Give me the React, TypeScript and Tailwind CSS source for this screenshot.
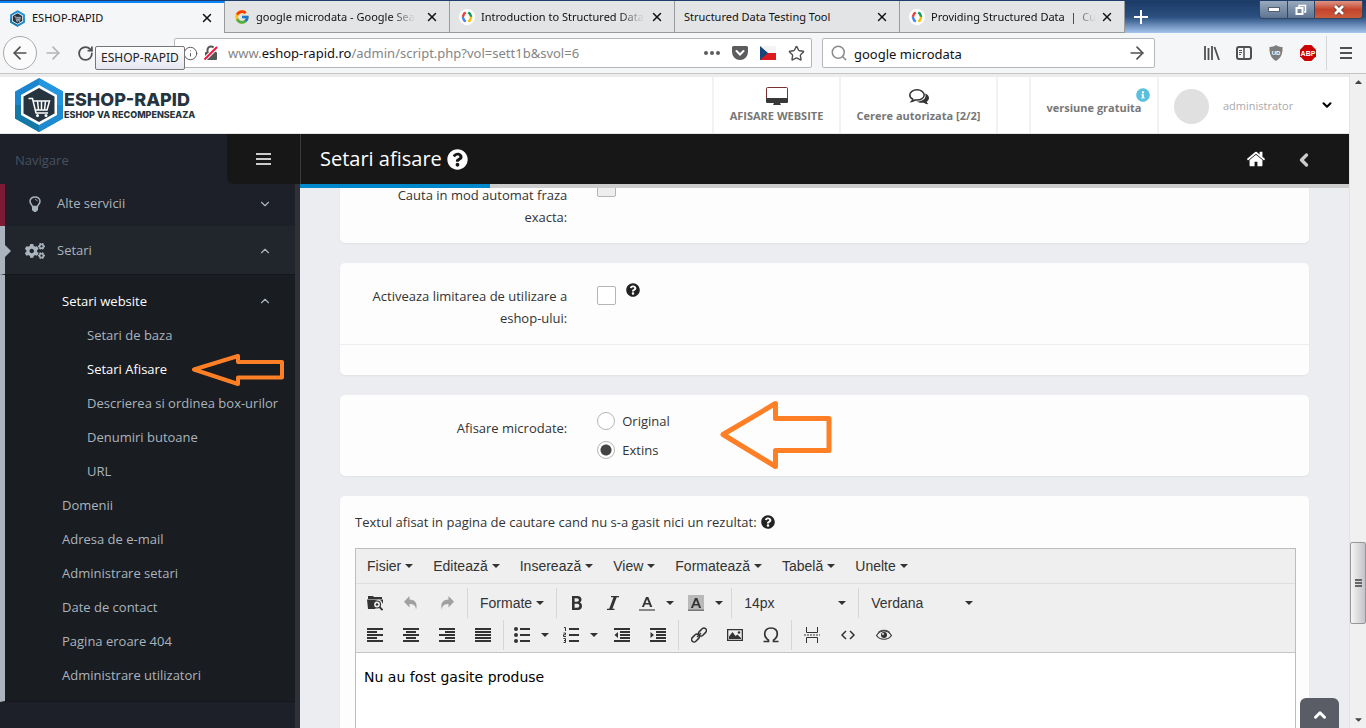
import type { ReactNode } from "react";
import { FaCaretDown, FaCogs, FaInfoCircle, FaQuestionCircle } from "react-icons/fa";
import { FcGoogle } from "react-icons/fc";
import {
	ArrowLeft,
	ArrowRight,
	ChevronDown,
	ChevronLeft,
	ChevronUp,
	Info,
	RotateCw,
	Search,
	Star,
	X,
} from "lucide-react";

function HexLogo({ size }: { size: number }) {
	return (
		<svg width={size} height={size} viewBox="0 0 56 56" className="shrink-0">
			<path d="M28 1 52 14.500V41.500L28 55 4 41.500V14.500Z" fill="#1b86cf" />
			<path d="M28 1 52 14.500V28H28Z" fill="#2496dd" />
			<path d="M4 28V41.500L28 55V28Z" fill="#1579a8" />
			<path d="M28 55 52 41.500V28H28Z" fill="#1e8bd0" />
			<path d="M28 8 46 18V38L28 48 10 38V18Z" fill="#fff" />
			<path d="M28 11 43.500 19.500V36.500L28 45 12.500 36.500V19.500Z" fill="#263440" />
			<g stroke="#fff" fill="none" strokeWidth="1.500">
				<path d="M17.500 21.500h4l3.500 14.500h12" />
				<path d="M22.500 24h16l-2.500 9H24.500" />
				<path d="M26.500 24l1 9M30.500 24v9M34.500 24l-1 9" />
			</g>
			<circle cx="26.500" cy="38.500" r="1.500" fill="#fff" />
			<circle cx="35" cy="38.500" r="1.500" fill="#fff" />
		</svg>
	);
}

function DevelopersLogo() {
	return (
		<svg width="16" height="16" viewBox="0 0 16 16" className="shrink-0">
			<circle cx="8" cy="8" r="8" fill="#fff" />
			<g fill="none" strokeWidth="2.400">
				<path d="M6.800 3.500 5.200 4.500 3.700 8" stroke="#ea4335" />
				<path d="M3.700 8 5.200 11.500 6.800 12.500" stroke="#4285f4" />
				<path d="M9.200 3.500 10.800 4.500 12.300 8" stroke="#0f9d58" />
				<path d="M12.300 8 10.800 11.500 9.200 12.500" stroke="#fbbc05" />
			</g>
		</svg>
	);
}

interface TabProps {
	title: string;
	icon?: ReactNode;
	active?: boolean;
	faded?: boolean;
}

function BrowserTab({ title, icon, active, faded }: TabProps) {
	return (
		<div
			className={
				active
					? "flex h-full w-[225px] items-center border-r border-[#9a9a9c] border-t-2 border-t-[#0a84ff] bg-[#f5f6f7] pr-[10px] pl-[9px]"
					: "flex h-full w-[225px] items-center border-r border-b border-[#9a9a9c] bg-[#e3e4e6] pt-px pr-[10px] pl-[9px]"
			}
		>
			{icon}
			<span
				className={
					faded
						? "ml-[6px] mask-r-from-85% whitespace-pre"
						: "ml-[6px] whitespace-pre first:ml-0"
				}
			>
				{title}
			</span>
			<button type="button" aria-label="Close tab" className="ml-auto">
				<X size={14} strokeWidth={2.5} />
			</button>
		</div>
	);
}

function TabStrip() {
	return (
		<div className="flex h-[33px] border-t border-[#1f3d6b] bg-linear-to-b from-[#1b3a66] via-[#2c5080] to-[#a5c6ee] text-[11px] text-[#111]">
			<BrowserTab title="ESHOP-RAPID" icon={<HexLogo size={17} />} active />
			<BrowserTab title="google microdata - Google Sea" icon={<FcGoogle size={16} className="shrink-0" />} faded />
			<BrowserTab title="Introduction to Structured Data" icon={<DevelopersLogo />} faded />
			<BrowserTab title="Structured Data Testing Tool" />
			<BrowserTab title="Providing Structured Data  |  Cu" icon={<DevelopersLogo />} faded />
			<button type="button" aria-label="New tab" className="ml-[9px] flex items-center text-white">
				<svg width="14" height="14" viewBox="0 0 14 14">
					<path d="M7 0v14M0 7h14" stroke="currentColor" strokeWidth="2" />
				</svg>
			</button>
			<div className="mr-[3px] ml-auto flex h-[18px] overflow-hidden rounded-b-sm border border-t-0 border-[#33465f]">
				<button type="button" aria-label="Minimize" className="flex w-7 items-center justify-center border-r border-[#33465f] bg-linear-to-b from-[#9aa9bd] to-[#5d7492]">
					<svg width="12" height="5" viewBox="0 0 12 5">
						<rect x="0.500" y="0.500" width="11" height="4" fill="#fff" stroke="#55606e" />
					</svg>
				</button>
				<button type="button" aria-label="Restore" className="flex w-[27px] items-center justify-center border-r border-[#33465f] bg-linear-to-b from-[#9aa9bd] to-[#5d7492]">
					<svg width="12" height="12" viewBox="0 0 12 12" fill="none">
						<path d="M4 3V1.500h6.500V8H9" stroke="#fff" strokeWidth="1.500" />
						<rect x="1.500" y="4" width="6" height="6" stroke="#fff" strokeWidth="2" />
					</svg>
				</button>
				<button type="button" aria-label="Close" className="flex w-[47px] items-center justify-center bg-linear-to-b from-[#dd9384] via-[#c4432b] to-[#c95d3c]">
					<svg width="14" height="12" viewBox="0 0 14 12">
						<path d="M3 2l8 8M11 2l-8 8" stroke="#5b3a3a" strokeWidth="4.500" />
						<path d="M3 2l8 8M11 2l-8 8" stroke="#fff" strokeWidth="2.800" />
					</svg>
				</button>
			</div>
		</div>
	);
}

function AddressBar() {
	return (
		<div className="relative flex h-[41px] items-center border-b border-[#c4c4c6] bg-[#f5f6f7] text-[#4f5052]">
			<button type="button" aria-label="Back" className="ml-[3px] flex size-[34px] shrink-0 items-center justify-center rounded-full border border-[#a9a9ab] bg-[#fbfbfb]">
				<ArrowLeft size={20} />
			</button>
			<button type="button" aria-label="Forward" className="ml-[6px] text-[#b5b5b7]">
				<ArrowRight size={20} />
			</button>
			<button type="button" aria-label="Reload" className="ml-[14px]">
				<RotateCw size={17} strokeWidth={2.5} />
			</button>
			<div className="ml-[80px] flex h-[30px] min-w-0 flex-1 items-center rounded-xs border border-[#b7b7b9] bg-white pr-[6px] pl-2">
				<Info size={15} strokeWidth={1.500} className="shrink-0 text-[#555]" />
				<svg width="16" height="16" viewBox="0 0 16 16" className="ml-[5px] shrink-0">
					<path d="M4.500 8V5a3.500 3.500 0 0 1 7 0v3" fill="none" stroke="#555" strokeWidth="2" />
					<rect x="2" y="7" width="12" height="8" rx="1" fill="#555" />
					<path d="M1.500 14.500 14 2" stroke="#fff" strokeWidth="4" />
					<path d="M1.500 14.500 14 2" stroke="#f2123b" strokeWidth="2" />
				</svg>
				<div
					role="textbox"
					aria-label="Address"
					contentEditable
					suppressContentEditableWarning
					className="ml-[9px] min-w-0 flex-1 overflow-hidden pt-px text-[13px] whitespace-nowrap text-[#858585]"
				>
					www.<span className="text-[#111]">eshop-rapid.ro</span>/admin/script.php?vol=sett1b&amp;svol=6
				</div>
				<svg width="16" height="4" viewBox="0 0 16 4" fill="#5c5c5e">
					<circle cx="2" cy="2" r="2" />
					<circle cx="8" cy="2" r="2" />
					<circle cx="14" cy="2" r="2" />
				</svg>
				<svg width="16" height="15" viewBox="0 0 16 15" className="ml-3">
					<path d="M1.500 0h13A1.500 1.500 0 0 1 16 1.500V6A8 8 0 0 1 0 6V1.500A1.500 1.500 0 0 1 1.500 0Z" fill="#5c5c5e" />
					<path d="m4.500 5 3.500 3.500L11.500 5" fill="none" stroke="#fff" strokeWidth="2" strokeLinecap="round" />
				</svg>
				<svg width="16" height="14" viewBox="0 0 16 14" className="ml-3">
					<path d="M0 0h16v7H0z" fill="#f4f4f4" />
					<path d="M0 7h16v7H0z" fill="#dc1a1f" />
					<path d="M0 0 8 7 0 14Z" fill="#17457c" />
				</svg>
				<Star size={17} className="ml-3" />
			</div>
			<label className="ml-[10px] flex h-[30px] w-[333px] items-center rounded-xs border border-[#b7b7b9] bg-white px-[7px]">
				<Search size={18} className="shrink-0 text-[#8a8a8c]" />
				<input type="text" aria-label="Search" defaultValue="google microdata" className="ml-[6px] min-w-0 flex-1 pt-[3px] text-[13px] text-[#111] outline-none" />
				<ArrowRight size={20} />
			</label>
			<div className="ml-[49px] flex items-center gap-4">
				<svg width="16" height="14" viewBox="0 0 16 14" stroke="currentColor" strokeWidth="1.800">
					<path d="M1 0v14M4.500 2v12M8 0v14M10.500 1l4.500 13" />
				</svg>
				<svg width="16" height="14" viewBox="0 0 16 14" fill="none" stroke="currentColor">
					<rect x="1" y="1" width="14" height="12" rx="2" strokeWidth="2" />
					<path d="M8 1v12" strokeWidth="1.500" />
					<path d="M3 4.500h3M3 6.500h3M3 8.500h2" />
				</svg>
				<svg width="16" height="16" viewBox="0 0 16 16">
					<path d="M8 0c2 1.500 4 2 6.500 2 .3 6-1 11-6.500 14C2.500 13 1.200 8 1.500 2 4 2 6 1.500 8 0Z" fill="#7d7d7d" />
					<text x="8" y="10" textAnchor="middle" fill="#fff" fontSize="6" fontWeight="bold" fontFamily="Liberation Sans, sans-serif">
						UD
					</text>
				</svg>
				<svg width="16" height="16" viewBox="0 0 16 16">
					<path d="M4.700 0h6.600L16 4.700v6.600L11.300 16H4.700L0 11.300V4.700Z" fill="#cc0000" />
					<text x="8" y="10.500" textAnchor="middle" fill="#fff" fontSize="7" fontWeight="bold" fontFamily="Liberation Sans, sans-serif">
						ABP
					</text>
				</svg>
			</div>
			<button type="button" aria-label="Menu" className="mr-[14px] ml-[10px] flex h-[34px] items-center border-l border-[#d5d5d7] pl-[13px]">
				<svg width="12" height="12" viewBox="0 0 12 12" fill="currentColor">
					<path d="M0 0h12v2H0zM0 5h12v2H0zM0 10h12v2H0z" />
				</svg>
			</button>
			<div role="tooltip" className="absolute top-[13px] left-[95px] rounded-xs border border-[#767676] bg-linear-to-b from-white to-[#e5e6f1] px-[5px] text-[12px] leading-[22px] text-[#222]">
				ESHOP-RAPID
			</div>
		</div>
	);
}

function SiteHeader() {
	return (
		<header className="flex h-[60px] shrink-0 border-t-[3px] border-b border-t-[#ececec] border-b-[#e6e6e6] bg-white text-[11px] font-bold text-[#777]">
			<a href="#home" className="flex items-center pl-[11px] font-['Inter',sans-serif] font-extrabold text-[#263440]">
				<HexLogo size={56} />
				<span className="-ml-[3px] flex flex-col">
					<span className="text-[18px] leading-[18px]">ESHOP-RAPID</span>
					<span className="text-[9px] leading-[11px]">ESHOP VA RECOMPENSEAZA</span>
				</span>
			</a>
			<a href="#website" className="ml-auto flex w-[127px] flex-col items-center border-l-2 border-[#f2f2f2] pt-[9px]">
				<svg width="22" height="18" viewBox="0 0 22 18" className="mt-px mb-[3px]">
					<rect x="0.500" y="0.500" width="21" height="14" rx="1" fill="#fff" stroke="#7a2f33" />
					<path d="M0 11h22v4q0 1-1 1h-7l1 2H7l1-2H1q-1 0-1-1z" fill="#383838" />
				</svg>
				<span className="leading-4">AFISARE WEBSITE</span>
			</a>
			<a href="#cerere" className="flex w-[157px] flex-col items-center border-l-2 border-[#f2f2f2] pt-[9px]">
				<svg width="20" height="17" viewBox="0 0 20 17" className="mt-[3px] mb-[2px]" fill="#333">
					<path d="M16 4.500c2.500.8 4 2.400 4 4.500 0 1.500-.9 2.800-2.300 3.700.2 1 .8 1.700 1.600 2.400-1.700.2-3.300-.4-4.500-1.400-2.600.4-5.300.1-7.300-1.200 5 .2 9.500-2 9-6.500z" />
					<path
						d="M8 .8C12 .8 15.200 3 15.200 5.900S12 11 8 11c-.6 0-1.200 0-1.700-.1-1 .8-2.200 1.300-3.600 1.500.6-.6 1-1.300 1.100-2.200C2 9.300.8 7.700.8 5.900.8 3 4 .8 8 .8Z"
						fill="#fff"
						stroke="#333"
						strokeWidth="1.500"
					/>
				</svg>
				<span className="leading-4">Cerere autorizata [2/2]</span>
			</a>
			<div className="w-[33px] border-l-2 border-[#f2f2f2]" />
			<a href="#versiune" className="relative flex w-[128px] items-center justify-center border-l-2 border-[#f2f2f2] pt-[6px]">
				versiune gratuita
				<FaInfoCircle size={14} className="absolute top-[11px] right-[7px] text-[#5bc0de]" />
			</a>
			<button type="button" className="flex w-[192px] items-center border-l-2 border-[#f2f2f2] pr-[15px] pl-[15px] font-normal text-[#aaa]">
				<span className="mt-[2px] size-[35px] rounded-full bg-[#e0e0e0]" />
				<span className="ml-[14px] pt-[3px] text-[11px]">administrator</span>
				<ChevronDown size={14} strokeWidth={3.500} className="ml-auto text-black" />
			</button>
		</header>
	);
}

function SubLink({ label, nested, active, children }: { label: string; nested?: boolean; active?: boolean; children?: ReactNode }) {
	return (
		<li className="relative">
			<a
				href="#setari"
				className={
					nested
						? active
							? "block pl-[82px] leading-[34px] text-white"
							: "block pl-[82px] leading-[34px]"
						: "block pl-[57px] leading-[34px]"
				}
			>
				{label}
			</a>
			{children}
		</li>
	);
}

function Sidebar() {
	return (
		<aside className="w-[300px] shrink-0 overflow-hidden border-r-[5px] border-[#303138] bg-[#1d2028] text-[13px] text-[#abb4be]">
			<a href="#servicii" className="flex h-[42px] items-center border-l-[5px] border-[#7d1b34] pr-[23px] pb-[3px] pl-6">
				<svg width="12" height="16" viewBox="0 0 12 16" fill="none" stroke="currentColor">
					<path d="M3.500 10.500C3.500 9 1 8 1 5.300 1 2.700 3.300 1 6 1s5 1.700 5 4.300C11 8 8.500 9 8.500 10.500Z" strokeWidth="1.500" />
					<path d="M6 3.500c1.200 0 2 .6 2.300 1.700" />
					<path d="M3.500 11h5v3L7 15.500H5L3.500 14z" fill="currentColor" />
				</svg>
				<span className="ml-4">Alte servicii</span>
				<ChevronDown size={14} className="ml-auto" />
			</a>
			<a href="#setari" className="relative flex h-12 items-center border-l-[5px] border-[#abb4be] bg-[#21262d] pt-[2px] pr-[23px] pl-5">
				<FaCogs size={20} />
				<span className="ml-3">Setari</span>
				<ChevronUp size={14} className="ml-auto" />
				<svg width="6" height="12" viewBox="0 0 6 12" className="absolute left-0" fill="#abb4be">
					<path d="M0 0l6 6-6 6z" />
				</svg>
			</a>
			<ul className="border-t border-b border-l-[5px] border-[#15171a] border-l-[#abb4be] bg-[#191c20] pt-[9px] pb-[9px]">
				<li>
					<a href="#website" className="flex items-center pr-[23px] pl-[57px] leading-[34px] text-white">
						Setari website
						<ChevronUp size={14} className="ml-auto text-[#abb4be]" />
					</a>
				</li>
				<SubLink label="Setari de baza" nested />
				<SubLink label="Setari Afisare" nested active>
					<svg width="96" height="34" viewBox="0 0 96 34" className="absolute top-0 left-[185px]" fill="none" stroke="#ff7f27" strokeWidth="4">
						<path d="M4 17.500 48 4v6h44v15.500H48V32Z" strokeLinejoin="round" />
					</svg>
				</SubLink>
				<SubLink label="Descrierea si ordinea box-urilor" nested />
				<SubLink label="Denumiri butoane" nested />
				<SubLink label="URL" nested />
				<SubLink label="Domenii" />
				<SubLink label="Adresa de e-mail" />
				<SubLink label="Administrare setari" />
				<SubLink label="Date de contact" />
				<SubLink label="Pagina eroare 404" />
				<SubLink label="Administrare utilizatori" />
			</ul>
		</aside>
	);
}

function TitleBar() {
	return (
		<div className="flex h-[50px] shrink-0 bg-[#171717]">
			<div className="flex w-[300px] shrink-0 bg-[#1d2028]">
				<span className="flex flex-1 items-center pt-1 pl-[15px] text-[13px] text-[#465162]">Navigare</span>
				<button type="button" aria-label="Comuta meniul" className="flex w-[73px] items-center justify-center rounded-bl-md bg-[#171717] text-[#ccc]">
					<svg width="15" height="12" viewBox="0 0 15 12" fill="currentColor">
						<path d="M0 0h15v2H0zM0 5h15v2H0zM0 10h15v2H0z" />
					</svg>
				</button>
			</div>
			<div className="flex flex-1 items-center border-l border-[#3a3a3a] pr-[35px] pl-[19px] text-white">
				<h1 className="text-[20px]">Setari afisare</h1>
				<FaQuestionCircle size={21} className="ml-[5px]" />
				<a href="#home" aria-label="Acasa" className="ml-auto">
					<svg width="20" height="20" viewBox="0 0 1792 1792" fill="currentColor">
						<path d="M1472 992v480q0 26-19 45t-45 19h-384v-384h-256v384h-384q-26 0-45-19t-19-45v-480q0-1 .5-3t.5-3l575-474 575 474q1 2 1 6zm223-69l-62 74q-8 9-21 11h-3q-13 0-21-7l-692-577-692 577q-12 8-24 7-13-2-21-11l-62-74q-8-10-7-23.5t11-21.5l719-599q32-26 76-26t76 26l244 204v-195q0-14 9-23t23-9h192q14 0 23 9t9 23v408l219 182q10 8 11 21.5t-7 23.5z" />
					</svg>
				</a>
				<button type="button" aria-label="Inapoi" className="ml-7 pt-[2px] text-[#ccc]">
					<ChevronLeft size={20} strokeWidth={4} />
				</button>
			</div>
		</div>
	);
}

function Caret() {
	return (
		<svg width="8" height="4" viewBox="0 0 8 4" className="shrink-0" fill="#333">
			<path d="M0 0h8L4 4z" />
		</svg>
	);
}

function MenuButton({ label }: { label: string }) {
	return (
		<button type="button" className="flex h-[30px] items-center gap-1 px-[10px]">
			{label}
			<Caret />
		</button>
	);
}

function Group({ children, first }: { children: ReactNode; first?: boolean }) {
	return (
		<div className={first ? "flex h-[30px] items-center pr-[2px] pl-px" : "flex h-[30px] items-center border-l border-[#d6d6d6] px-[2px]"}>
			{children}
		</div>
	);
}

function ToolIcon({ label, children, split, muted }: { label: string; children: ReactNode; split?: boolean; muted?: boolean }) {
	return (
		<button
			type="button"
			aria-label={label}
			className={
				split
					? "flex h-[30px] w-[49px] items-center gap-[11px] pl-2"
					: muted
						? "flex h-[30px] w-9 items-center justify-center text-[#a0a0a0]"
						: "flex h-[30px] w-9 items-center justify-center"
			}
		>
			<svg width="16" height="16" viewBox="0 0 16 16" fill="currentColor" className="shrink-0">
				{children}
			</svg>
			{split && <Caret />}
		</button>
	);
}

function ToolSelect({ label, value }: { label: string; value: string }) {
	return (
		<label className="relative flex h-[30px] w-[122px] items-center">
			<select aria-label={label} defaultValue={value} className="w-full appearance-none pl-[10px] outline-none">
				<option>{value}</option>
			</select>
			<span className="pointer-events-none absolute right-[10px]">
				<Caret />
			</span>
		</label>
	);
}

function Editor() {
	return (
		<div className="flex-1 border border-[#bdbdbd] bg-white font-['Liberation_Sans',sans-serif] text-[14px] text-[#333]">
			<div className="flex h-[35px] items-center border-b border-[#dedede] bg-[#efefef] pl-px">
				<MenuButton label="Fisier" />
				<MenuButton label="Editează" />
				<MenuButton label="Inserează" />
				<MenuButton label="View" />
				<MenuButton label="Formatează" />
				<MenuButton label="Tabelă" />
				<MenuButton label="Unelte" />
			</div>
			<div className="flex flex-col gap-[2px] border-b border-[#c5c5c5] bg-[#efefef] pt-1 pb-[2px]">
				<div className="flex">
					<Group first>
						<ToolIcon label="Cauta fisier">
							<path d="M1 1h5l1 1h8v2H1zM0 4.500h16V9l-2-3.500A4.500 4.500 0 1 0 9 14H1z" />
							<circle cx="10" cy="9.500" r="3.500" fill="none" stroke="currentColor" strokeWidth="1.200" />
							<circle cx="10" cy="9.500" r="1.300" />
							<path d="m12.500 12 3 3" stroke="currentColor" strokeWidth="1.800" />
						</ToolIcon>
						<ToolIcon label="Anuleaza" muted>
							<path d="M6.500 1v3.500C12 4.500 15 8 13 15c0-4-2-6-6.500-6v3.500L1 6.800z" />
						</ToolIcon>
						<ToolIcon label="Refa" muted>
							<path d="M9.500 1v3.500C4 4.500 1 8 3 15c0-4 2-6 6.500-6v3.500L15 6.800z" />
						</ToolIcon>
					</Group>
					<Group>
						<MenuButton label="Formate" />
					</Group>
					<Group>
						<ToolIcon label="Aldin">
							<path
								fillRule="evenodd"
								d="M3 1h5.500C11 1 12.500 2.300 12.500 4.500c0 1.300-.6 2.400-1.700 3C12.300 8 13 9.300 13 11c0 2.500-1.600 4-4.200 4H3zM5.600 3.200v3.500h2.200c1.300 0 2-.6 2-1.700s-.7-1.800-2-1.800zM5.600 8.800v4h2.500c1.400 0 2.200-.7 2.200-2s-.8-2-2.200-2z"
							/>
						</ToolIcon>
						<ToolIcon label="Cursiv">
							<path d="M6 1h8v1.200h-2.300L7.400 13.800H9.500V15H2v-1.200h2.200L8.500 2.200H6z" />
						</ToolIcon>
						<ToolIcon label="Culoare text" split>
							<path fillRule="evenodd" d="M7 2h2.300l4 10H11L10.200 9.500H5.900L5 12H2.900zM8.100 4.200 6.500 8h3.200z" />
							<path d="M0 14h16v2H0z" fill="#888" />
						</ToolIcon>
						<ToolIcon label="Culoare fundal" split>
							<path d="M0 0h16v16H0z" fill="#b9b9b9" />
							<path fillRule="evenodd" d="M7 3h2.300l3.800 10H11L10.200 10.500H5.900L5 13H2.900zM8.100 5.200 6.500 9h3.200z" />
							<path d="M0 14.500h16V16H0z" fill="#777" />
						</ToolIcon>
					</Group>
					<Group>
						<ToolSelect label="Marime font" value="14px" />
					</Group>
					<Group>
						<ToolSelect label="Font" value="Verdana" />
					</Group>
				</div>
				<div className="flex">
					<Group first>
						<ToolIcon label="Aliniere stanga">
							<path d="M0 1h16v2H0zM0 4h10v2H0zM0 7h16v2H0zM0 10h10v2H0zM0 13h16v2H0z" />
						</ToolIcon>
						<ToolIcon label="Centrare">
							<path d="M0 1h16v2H0zM3 4h10v2H3zM0 7h16v2H0zM3 10h10v2H3zM0 13h16v2H0z" />
						</ToolIcon>
						<ToolIcon label="Aliniere dreapta">
							<path d="M0 1h16v2H0zM6 4h10v2H6zM0 7h16v2H0zM6 10h10v2H6zM0 13h16v2H0z" />
						</ToolIcon>
						<ToolIcon label="Justificare">
							<path d="M0 1h16v2H0zM0 4h16v2H0zM0 7h16v2H0zM0 10h16v2H0zM0 13h16v2H0z" />
						</ToolIcon>
					</Group>
					<Group>
						<ToolIcon label="Lista" split>
							<circle cx="2" cy="2" r="2" />
							<circle cx="2" cy="8" r="2" />
							<circle cx="2" cy="14" r="2" />
							<path d="M6 1h10v2H6zM6 7h10v2H6zM6 13h10v2H6z" />
						</ToolIcon>
						<ToolIcon label="Lista numerotata" split>
							<path d="M6 1h10v2H6zM6 7h10v2H6zM6 13h10v2H6z" />
							<path d="M1 .5h1.500V4M.5 6h2v1.700h-2v1.800H3M.5 11.500h2v4h-2M1 13.500h1.500" fill="none" stroke="currentColor" />
						</ToolIcon>
						<ToolIcon label="Micsoreaza indentarea">
							<path d="M0 1h16v2H0zM6 4h10v2H6zM6 7h10v2H6zM6 10h10v2H6zM0 13h16v2H0zM4 5v6L.5 8z" />
						</ToolIcon>
						<ToolIcon label="Mareste indentarea">
							<path d="M0 1h16v2H0zM6 4h10v2H6zM6 7h10v2H6zM6 10h10v2H6zM0 13h16v2H0zM.5 5v6L4 8z" />
						</ToolIcon>
					</Group>
					<Group>
						<ToolIcon label="Link">
							<g fill="none" stroke="currentColor" strokeWidth="1.500">
								<rect x="7" y="2.500" width="9" height="5" rx="2.500" transform="rotate(-45 11.500 5)" />
								<rect x="0" y="8.500" width="9" height="5" rx="2.500" transform="rotate(-45 4.500 11)" />
								<path d="m6 10 4-4" />
							</g>
						</ToolIcon>
						<ToolIcon label="Imagine">
							<path fillRule="evenodd" d="M0 2h16v12H0zM1.300 3.300v9.400h13.400V3.300z" />
							<path d="M2 12V9.500L5.500 5l3 4 2-1.500L14 11v1z" />
							<circle cx="12" cy="5.500" r="1.300" />
						</ToolIcon>
						<ToolIcon label="Caracter special">
							<path d="M.5 14.500h5v-1.300C3 11.500 1.700 9.700 1.700 6.800 1.700 3.400 4 1 8 1s6.300 2.400 6.300 5.800c0 2.900-1.300 4.700-3.800 6.400v1.300h5" fill="none" stroke="currentColor" strokeWidth="1.700" />
						</ToolIcon>
					</Group>
					<Group>
						<ToolIcon label="Intrerupere pagina">
							<path d="M2.500 0v5.500h11V0M2.500 16v-5.500h11V16" fill="none" stroke="currentColor" />
							<path d="M0 8h16" stroke="currentColor" strokeDasharray="2 1" />
						</ToolIcon>
						<ToolIcon label="Cod sursa">
							<path d="M6 4 2 8l4 4M10 4l4 4-4 4" fill="none" stroke="currentColor" strokeWidth="1.500" />
						</ToolIcon>
						<ToolIcon label="Previzualizare">
							<path d="M.5 8.500C4 2.500 12 2.500 15.500 8.500 12 13.500 4 13.500.5 8.500Z" fill="none" stroke="currentColor" strokeWidth="1.100" />
							<path d="M2 5.500C5 2.500 11 2.500 14 5.500" fill="none" stroke="currentColor" />
							<circle cx="8" cy="8" r="3" />
							<circle cx="7" cy="7" r="1" fill="#efefef" />
						</ToolIcon>
					</Group>
				</div>
			</div>
			<textarea
				aria-label="Text afisat"
				defaultValue="Nu au fost gasite produse"
				className="block h-[120px] w-full resize-none px-2 py-[14px] font-['DejaVu_Sans',sans-serif] text-[14px] leading-5 text-black outline-none"
			/>
		</div>
	);
}

const checkClass = "size-[19px] shrink-0 appearance-none rounded-xs border border-[#b5b5b5] bg-white disabled:bg-[#eee]";
const radioClass = "size-[18px] shrink-0 appearance-none rounded-full border border-[#b5b5b5] bg-white checked:bg-[radial-gradient(circle,#444_5px,#fff_6px)]";

function Content() {
	return (
		<main className="relative flex flex-1 flex-col gap-5 overflow-hidden bg-[#ecedf0] px-10 text-[13px] leading-[22px] text-[#333]">
			<section className="-mt-4 flex rounded-[5px] bg-[#fdfdfd] pt-3 pb-[15px] shadow-xs">
				<label htmlFor="fraza" className="w-1/4 px-[15px] text-right">
					Cauta in mod automat fraza exacta:
				</label>
				<div className="px-[15px]">
					<input id="fraza" type="checkbox" disabled className={`${checkClass} -mt-[6px] block`} />
				</div>
			</section>

			<section className="rounded-[5px] bg-[#fdfdfd] shadow-xs">
				<div className="flex border-b border-[#eee] pt-[22px] pb-[15px]">
					<label htmlFor="limitare" className="w-1/4 px-[15px] text-right">
						Activeaza limitarea de utilizare a eshop-ului:
					</label>
					<div className="flex gap-[10px] px-[15px]">
						<input id="limitare" type="checkbox" className={`${checkClass} mt-px`} />
						<FaQuestionCircle size={14} className="-mt-[2px] text-[#222]" />
					</div>
				</div>
				<div className="h-[30px]" />
			</section>

			<section className="relative flex rounded-[5px] bg-[#fdfdfd] py-[15px] shadow-xs">
				<span className="w-1/4 px-[15px] pt-[7px] text-right">Afisare microdate:</span>
				<div className="flex flex-col gap-[7px] px-[15px]">
					<label className="flex items-center gap-[7px]">
						<input type="radio" name="microdate" className={radioClass} />
						Original
					</label>
					<label className="flex items-center gap-[7px]">
						<input type="radio" name="microdate" defaultChecked className={radioClass} />
						Extins
					</label>
				</div>
				<svg width="114" height="70" viewBox="0 0 114 70" className="absolute top-[5px] left-[379px]" fill="none" stroke="#ff7f27" strokeWidth="5">
					<path d="M4 34.500 56.500 3.500V18.500H110V50.500H56.500V66.500Z" strokeLinejoin="round" />
				</svg>
			</section>

			<section className="flex flex-1 flex-col rounded-[5px] bg-[#fdfdfd] pt-[15px] pr-[13px] pl-[15px] shadow-xs">
				<div className="flex items-center gap-1 pb-[15px]">
					<span>Textul afisat in pagina de cautare cand nu s-a gasit nici un rezultat:</span>
					<FaQuestionCircle size={14} className="text-[#222]" />
				</div>
				<Editor />
			</section>

			<a href="#top" aria-label="Sus" className="absolute right-[10px] bottom-0 flex h-[30px] w-[39px] items-center justify-center rounded-t-md bg-[#5b5d66] pt-1 text-white">
				<ChevronUp size={18} strokeWidth={4} />
			</a>
		</main>
	);
}

function ScrollBar() {
	return (
		<div className="flex w-[17px] shrink-0 flex-col items-center border-l border-[#e3e3e3] bg-[#f0f0f0]">
			<FaCaretDown size={11} className="my-[3px] rotate-180 text-[#444]" />
			<div className="flex-[451]" />
			<div className="flex h-[82px] w-full flex-col items-center justify-center gap-px rounded-xs border border-[#979797] bg-linear-to-r from-[#f5f5f5] to-[#c4c4c8]">
				<span className="h-[2px] w-[7px] bg-[#666]" />
				<span className="h-[2px] w-[7px] bg-[#666]" />
				<span className="h-[2px] w-[7px] bg-[#666]" />
			</div>
			<div className="flex-[87]" />
			<FaCaretDown size={11} className="my-[3px] text-[#444]" />
		</div>
	);
}

export default function App() {
	return (
		<div className="flex h-screen flex-col overflow-hidden font-['Noto_Sans',sans-serif]">
			<TabStrip />
			<AddressBar />
			<div className="flex min-h-0 flex-1">
				<div className="flex min-w-0 flex-1 flex-col font-['Open_Sans',sans-serif]">
					<SiteHeader />
					<TitleBar />
					<div className="flex min-h-0 flex-1">
						<Sidebar />
						<div className="flex min-w-0 flex-1 flex-col">
							<div className="h-1 shrink-0 bg-[#ccc]">
								<div className="h-1 w-[190px] bg-[#0088cc]" />
							</div>
							<Content />
						</div>
					</div>
				</div>
				<ScrollBar />
			</div>
		</div>
	);
}
